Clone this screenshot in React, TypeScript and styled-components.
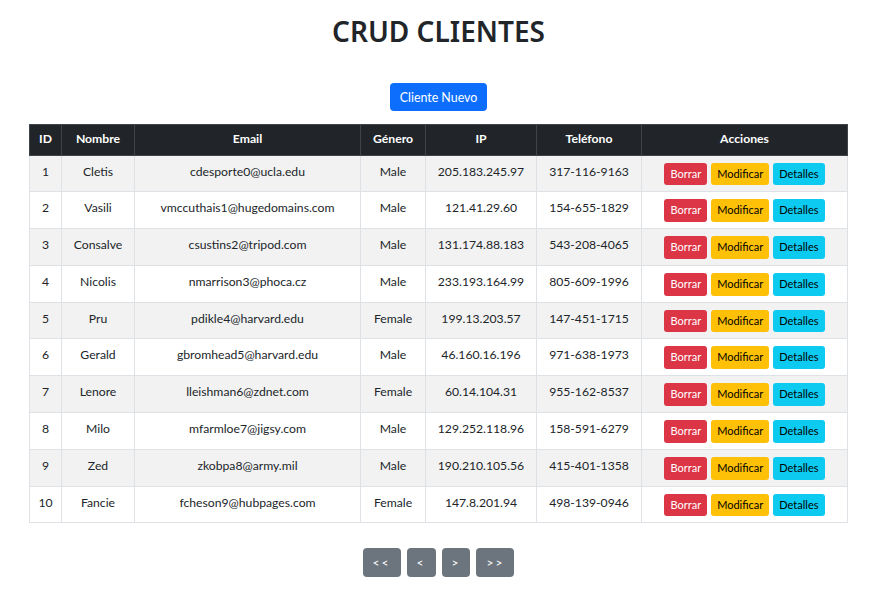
import React from "react";
import styled, { createGlobalStyle } from "styled-components";

const GlobalStyle = createGlobalStyle`
  html, body { margin: 0; padding: 0; background: #fff; }
  body {
    font-family: Lato, "Noto Sans", sans-serif;
    font-size: 12.2px;
    line-height: 19.5px;
    color: #212529;
  }
  * { box-sizing: border-box; }
`;

const Page = styled.div`
  padding: 14px 31px 30px 29px;
  display: flex;
  flex-direction: column;
  align-items: center;
`;

const Title = styled.h1`
  margin: 0;
  font-family: "Noto Sans", sans-serif;
  font-size: 28px;
  line-height: 34px;
  font-weight: 600;
  color: #212529;
`;

const Btn = styled.button<{ $variant: "primary" | "danger" | "warning" | "info" | "secondary"; $small?: boolean }>`
  font-family: inherit;
  border: 1px solid transparent;
  border-radius: ${(p) => (p.$small ? "3px" : "4px")};
  cursor: pointer;
  font-size: ${(p) => (p.$small ? "11px" : "12.4px")};
  line-height: ${(p) => (p.$small ? "16.8px" : "19px")};
  padding: ${(p) => (p.$small ? "2px 5px" : "4px 9px")};
  background: ${(p) =>
    ({
      primary: "#0d6efd",
      danger: "#dc3545",
      warning: "#ffc107",
      info: "#0dcaf0",
      secondary: "#6c757d",
    })[p.$variant]};
  color: ${(p) => (p.$variant === "warning" || p.$variant === "info" ? "#000" : "#fff")};
`;

const NewButton = styled(Btn)`
  margin-top: 35px;
  padding: 3px 9px;
  height: 28px;
`;

const Table = styled.table`
  margin-top: 13px;
  width: 818px;
  border-collapse: collapse;
  table-layout: fixed;
  border: 1px solid #dee2e6;
`;

const Th = styled.th`
  background: #212529;
  color: #fff;
  font-weight: 700;
  padding: 4px 6px 6px;
  border: 1px solid #3f4448;
  text-align: center;
  vertical-align: top;
`;

const Row = styled.tr<{ $striped: boolean }>`
  background: ${(p) => (p.$striped ? "#f2f2f2" : "#fff")};
`;

const Td = styled.td`
  padding: 6px 6px;
  border: 1px solid #dee2e6;
  text-align: center;
  vertical-align: top;
  height: 36.8px;
  white-space: nowrap;
`;

const Actions = styled.div`
  display: flex;
  justify-content: center;
  gap: 4px;
  padding-top: 1px;
`;

const Pager = styled.div`
  margin-top: 25px;
  display: flex;
  gap: 6px;
`;

const PageBtn = styled(Btn)`
  height: 29px;
  padding: 4px 9px;
  font-size: 12px;
  letter-spacing: 2px;
  min-width: 28px;
`;

const rows = [
  [1, "Cletis", "cdesporte0@ucla.edu", "Male", "205.183.245.97", "317-116-9163"],
  [2, "Vasili", "vmccuthais1@hugedomains.com", "Male", "121.41.29.60", "154-655-1829"],
  [3, "Consalve", "csustins2@tripod.com", "Male", "131.174.88.183", "543-208-4065"],
  [4, "Nicolis", "nmarrison3@phoca.cz", "Male", "233.193.164.99", "805-609-1996"],
  [5, "Pru", "pdikle4@harvard.edu", "Female", "199.13.203.57", "147-451-1715"],
  [6, "Gerald", "gbromhead5@harvard.edu", "Male", "46.160.16.196", "971-638-1973"],
  [7, "Lenore", "lleishman6@zdnet.com", "Female", "60.14.104.31", "955-162-8537"],
  [8, "Milo", "mfarmloe7@jigsy.com", "Male", "129.252.118.96", "158-591-6279"],
  [9, "Zed", "zkobpa8@army.mil", "Male", "190.210.105.56", "415-401-1358"],
  [10, "Fancie", "fcheson9@hubpages.com", "Female", "147.8.201.94", "498-139-0946"],
];

const widths = [32, 73, 226, 65, 111, 105, 206];
const headers = ["ID", "Nombre", "Email", "Género", "IP", "Teléfono", "Acciones"];

export default function App() {
  return (
    <>
      <GlobalStyle />
      <Page>
        <Title>CRUD CLIENTES</Title>
        <NewButton $variant="primary">Cliente Nuevo</NewButton>
        <Table>
          <colgroup>
            {widths.map((w, i) => (
              <col key={i} style={{ width: w }} />
            ))}
          </colgroup>
          <thead>
            <tr>
              {headers.map((h) => (
                <Th key={h}>{h}</Th>
              ))}
            </tr>
          </thead>
          <tbody>
            {rows.map((r, i) => (
              <Row key={String(r[0])} $striped={i % 2 === 0}>
                {r.map((c, j) => (
                  <Td key={j}>{c}</Td>
                ))}
                <Td>
                  <Actions>
                    <Btn $variant="danger" $small>Borrar</Btn>
                    <Btn $variant="warning" $small>Modificar</Btn>
                    <Btn $variant="info" $small>Detalles</Btn>
                  </Actions>
                </Td>
              </Row>
            ))}
          </tbody>
        </Table>
        <Pager>
          <PageBtn $variant="secondary">&lt;&lt;</PageBtn>
          <PageBtn $variant="secondary">&lt;</PageBtn>
          <PageBtn $variant="secondary">&gt;</PageBtn>
          <PageBtn $variant="secondary">&gt;&gt;</PageBtn>
        </Pager>
      </Page>
    </>
  );
}
